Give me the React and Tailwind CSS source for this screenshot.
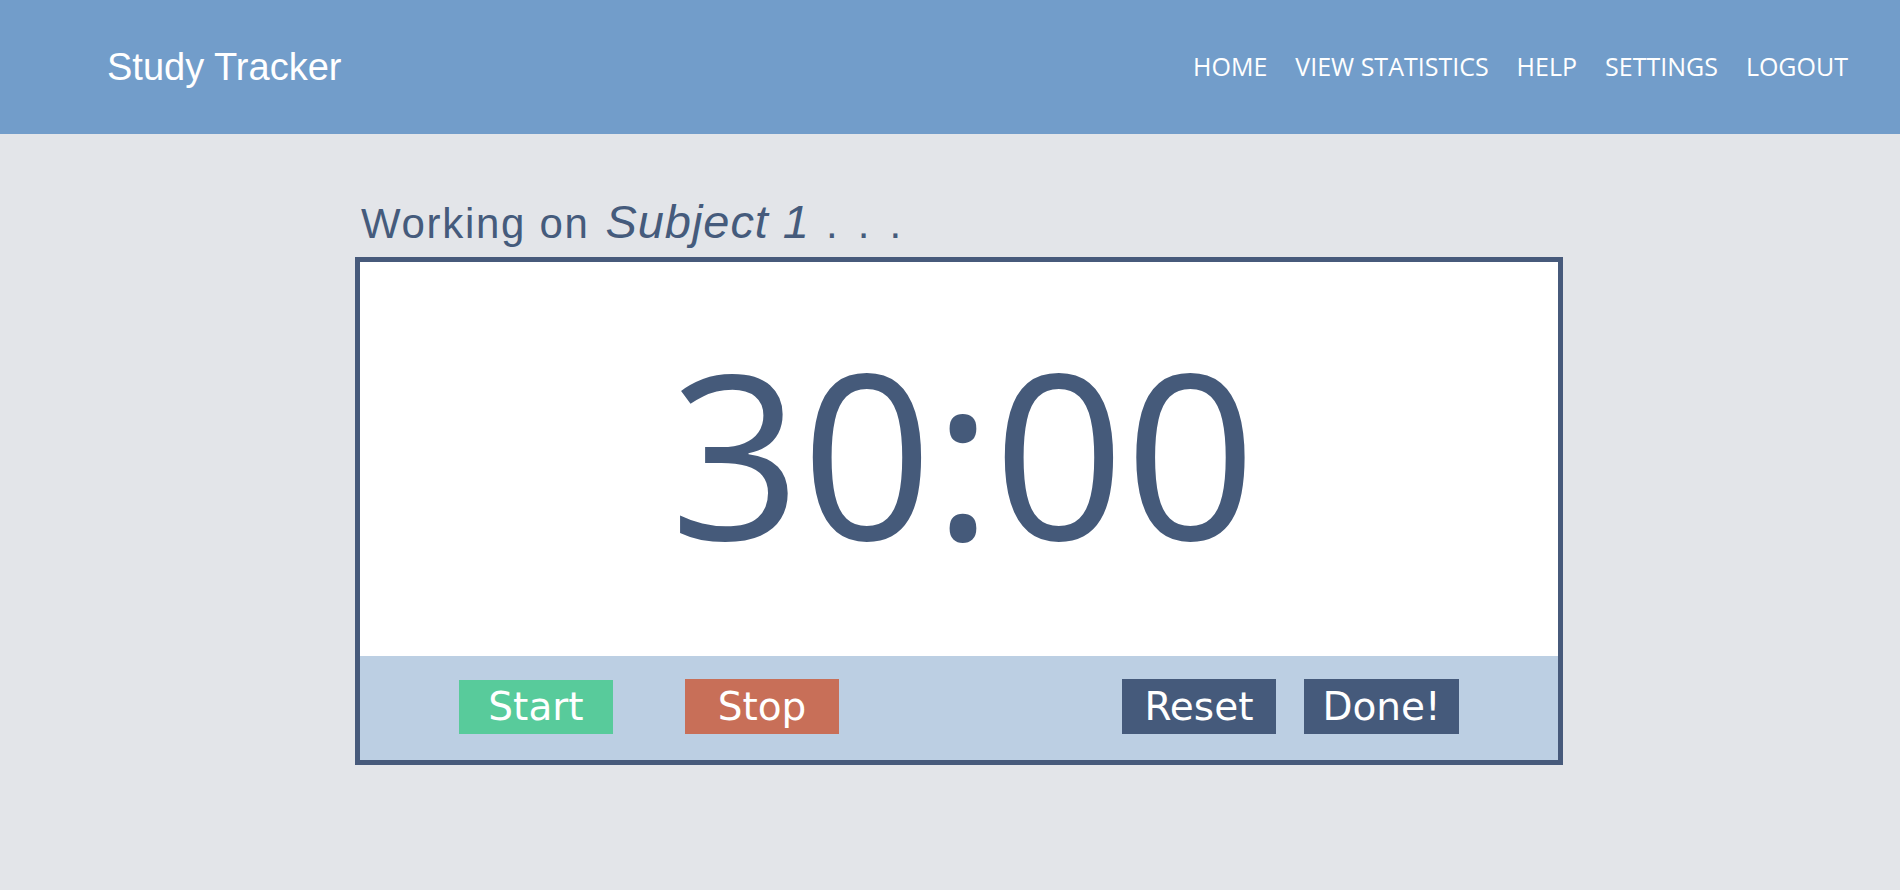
export default function App() {
  const nav = ["HOME", "VIEW STATISTICS", "HELP", "SETTINGS", "LOGOUT"];
  return (
    <div className="min-h-[890px] w-full bg-[#e3e5e9]">
      <header className="flex h-[134px] items-center justify-between bg-[#729dca] pl-[107px] pr-[52px]">
        <div className="text-[38px] text-white" style={{ fontFamily: '"Liberation Sans", Arial, sans-serif' }}>
          Study Tracker
        </div>
        <nav className="flex items-center gap-[28px] text-[25px] text-white" style={{ fontFamily: '"Open Sans", sans-serif' }}>
          {nav.map((n) => (
            <a key={n} className="cursor-pointer">{n}</a>
          ))}
        </nav>
      </header>

      <main className="pl-[355px] pt-[64px]">
        <div
          className="flex items-baseline pl-[6px] text-[#455b7c] leading-none"
          style={{ fontFamily: '"Liberation Sans", Arial, sans-serif' }}
        >
          <span className="text-[42px] tracking-[0.04em]">Working on</span>
          <span className="ml-[16px] text-[47px] italic tracking-[0.02em]">Subject 1</span>
          <span className="ml-[16px] text-[42px] tracking-[0.1em]">. . .</span>
        </div>

        <div className="mt-[12px] w-[1208px] border-[5px] border-[#475a7b] bg-white">
          <div className="flex h-[394px] items-center justify-center pb-[16px] pl-[8px]">
            <div
              className="text-[230px] leading-none text-[#455a7a]"
              style={{ fontFamily: '"Open Sans", sans-serif' }}
            >
              30:00
            </div>
          </div>
          <div
            className="flex h-[104px] items-center justify-between bg-[#bccfe3] px-[99px] pb-[3px]"
            style={{ fontFamily: '"DejaVu Sans", Verdana, sans-serif' }}
          >
            <div className="flex items-center gap-[72px]">
              <button className="flex h-[54px] w-[154px] items-center justify-center bg-[#58cb9b] text-[39px] leading-none text-white">
                Start
              </button>
              <button className="flex h-[55px] w-[154px] items-center justify-center bg-[#c86f58] text-[39px] leading-none text-white">
                Stop
              </button>
            </div>
            <div className="flex items-center gap-[28px]">
              <button className="flex h-[55px] w-[154px] items-center justify-center bg-[#455a7b] text-[39px] leading-none text-white">
                Reset
              </button>
              <button className="flex h-[55px] w-[155px] items-center justify-center bg-[#455a7b] text-[39px] leading-none text-white">
                Done!
              </button>
            </div>
          </div>
        </div>
      </main>
    </div>
  );
}
